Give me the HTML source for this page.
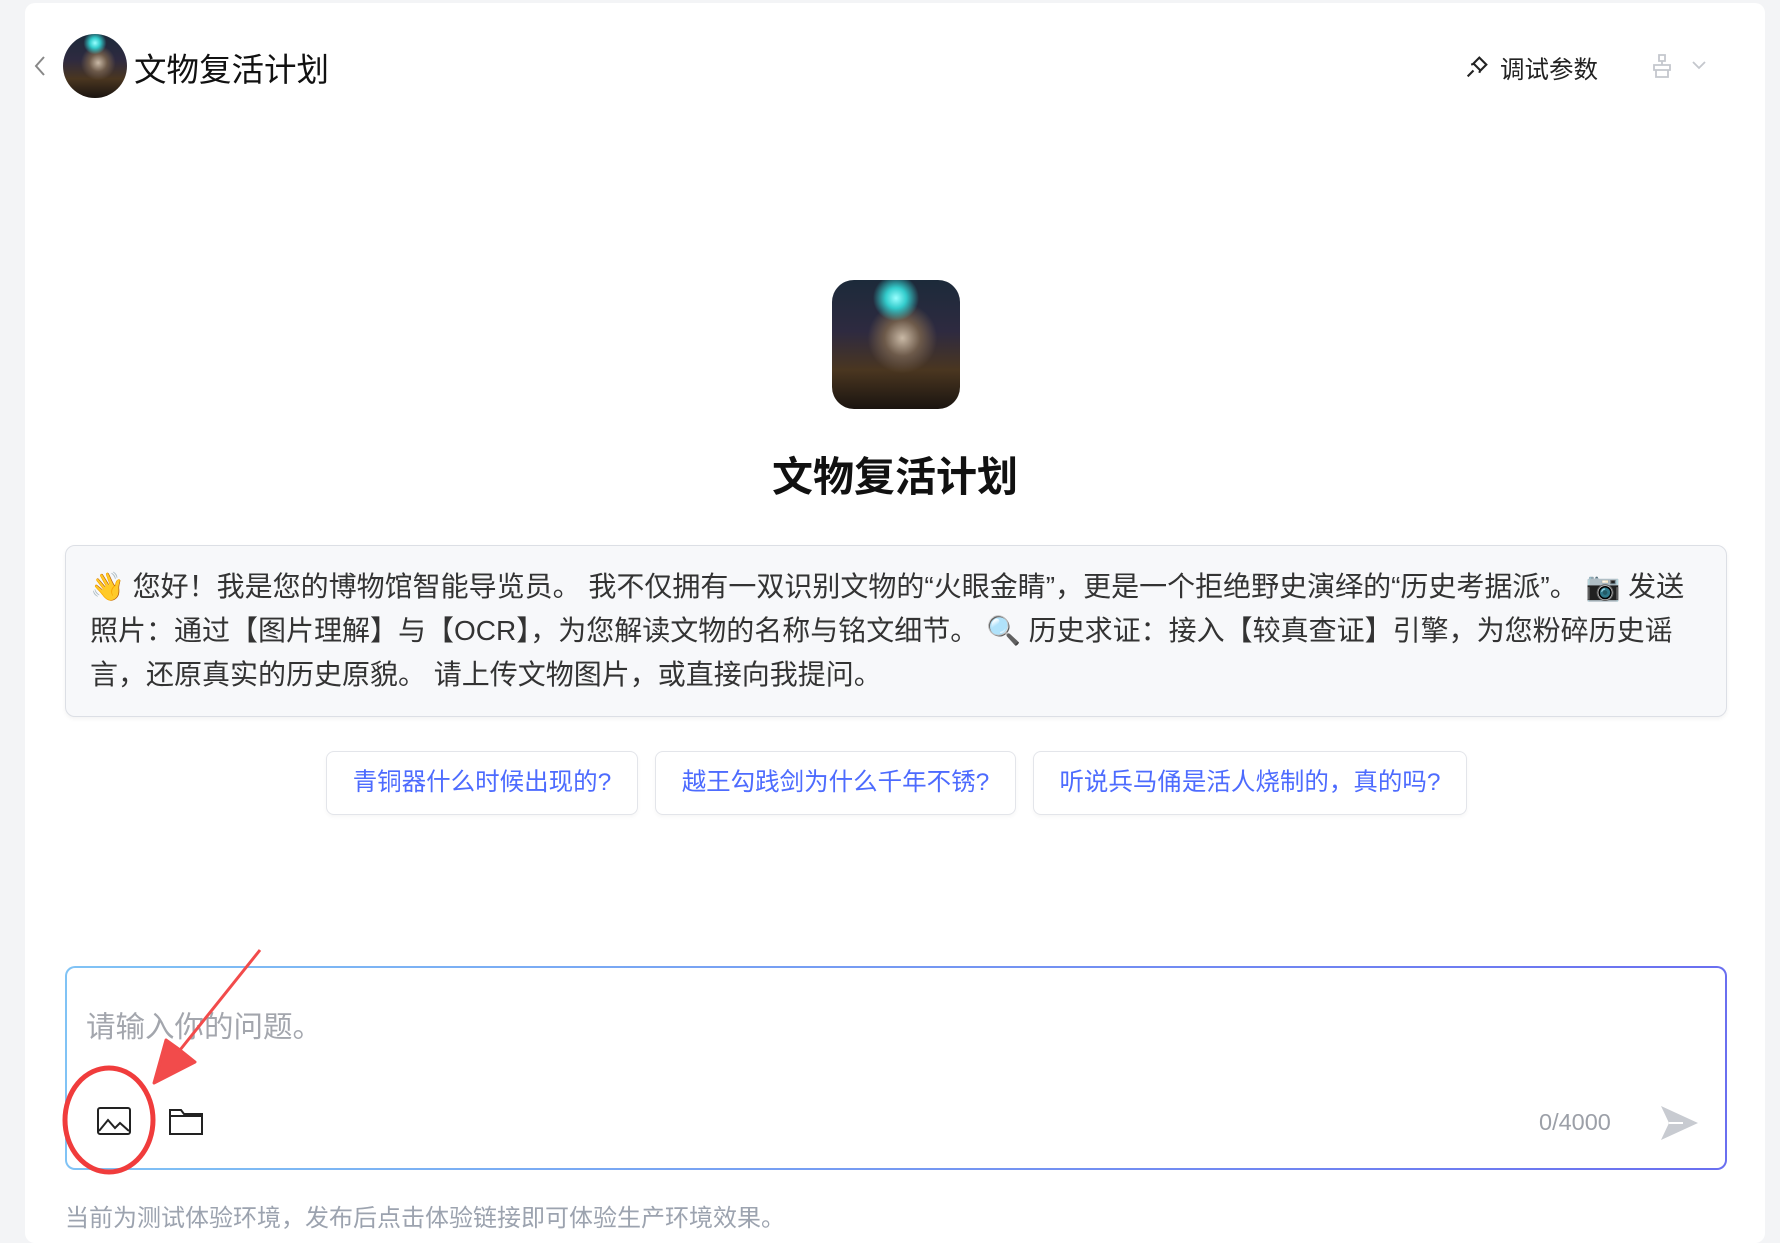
<!DOCTYPE html>
<html><head><meta charset="utf-8"><style>
*{margin:0;padding:0;box-sizing:border-box}
body{width:1780px;height:1230px;background:#f3f4f6;font-family:"Liberation Sans","Noto Sans CJK SC",sans-serif;position:relative;overflow:hidden}
.card{position:absolute;left:25px;top:3px;width:1740px;height:1240px;background:#fff;border-radius:10px}
.abs{position:absolute}
.img{background:radial-gradient(circle at 50% 14%,#9ff 0,#3cc 8%,transparent 18%),radial-gradient(ellipse at 55% 45%,#c9b9a6 0,#6d5a4a 18%,transparent 35%),linear-gradient(180deg,#1c2a3a 0%,#2e2a40 40%,#4a3620 70%,#1a1410 100%)}
.intro{left:65px;top:545px;width:1662px;height:172px;background:#f7f8fa;border:1px solid #dcdfe5;border-radius:10px;box-shadow:0 2px 4px rgba(0,0,0,.05);padding:19px 24px;font-size:28px;line-height:44px;color:#333}
.chip{top:751px;height:64px;border:1px solid #e3e5ea;border-radius:8px;background:#fff;color:#4d6bfe;font-size:24.5px;line-height:62px;text-align:center;box-shadow:0 2px 4px rgba(0,0,0,.04)}
.input{left:65px;top:966px;width:1662px;height:204px;border-radius:10px;padding:2px;background:linear-gradient(90deg,#80c3f5,#6a6ff0)}
.input>div{width:100%;height:100%;background:#fff;border-radius:8px}
</style></head><body>
<div class="card"></div>
<svg class="abs" style="left:32px;top:54px" width="16" height="24" viewBox="0 0 16 24"><path d="M12 3 4 12l8 9" fill="none" stroke="#888" stroke-width="2"/></svg>
<div class="abs img" style="left:63px;top:34px;width:64px;height:64px;border-radius:50%"></div>
<div class="abs" style="left:134px;top:44px;font-size:32.5px;color:#111">文物复活计划</div>
<svg class="abs" style="left:1463px;top:53px" width="28" height="28" viewBox="0 0 24 24" fill="none" stroke="#222" stroke-width="1.8"><path d="M14 4l6 6-5 5-6-6z M9 15l-5 5 M10 9l-3 1 M15 14l-1 3"/></svg>
<div class="abs" style="left:1500px;top:51px;font-size:24.5px;color:#222">调试参数</div>
<svg class="abs" style="left:1650px;top:52px" width="24" height="28" viewBox="0 0 24 28" fill="none" stroke="#c4c7cd" stroke-width="1.8"><path d="M9 3h6v6H9z M12 9v4 M4 13h16v5H4z M6 18v7h12v-7"/></svg>
<svg class="abs" style="left:1690px;top:58px" width="18" height="14" viewBox="0 0 18 14"><path d="M3 4l6 6 6-6" fill="none" stroke="#c4c7cd" stroke-width="1.8"/></svg>
<div class="abs img" style="left:832px;top:280px;width:128px;height:129px;border-radius:22px"></div>
<div class="abs" style="left:0;width:1790px;top:443px;text-align:center;font-size:41px;font-weight:bold;color:#111">文物复活计划</div>
<div class="abs intro">👋 您好！我是您的博物馆智能导览员。 我不仅拥有一双识别文物的“火眼金睛”，更是一个拒绝野史演绎的“历史考据派”。 📷 发送照片：通过【图片理解】与【OCR】，为您解读文物的名称与铭文细节。 🔍 历史求证：接入【较真查证】引擎，为您粉碎历史谣言，还原真实的历史原貌。 请上传文物图片，或直接向我提问。</div>
<div class="abs chip" style="left:326px;width:312px">青铜器什么时候出现的?</div>
<div class="abs chip" style="left:655px;width:361px">越王勾践剑为什么千年不锈?</div>
<div class="abs chip" style="left:1033px;width:434px">听说兵马俑是活人烧制的，真的吗?</div>
<div class="abs input"><div></div></div>
<div class="abs" style="left:86px;top:1004px;font-size:29.5px;color:#a3a6ad">请输入你的问题。</div>
<svg class="abs" style="left:96px;top:1106px" width="36" height="30" viewBox="0 0 36 30" fill="none" stroke="#222" stroke-width="2"><rect x="2" y="2" width="32" height="26" rx="2"/><path d="M3 25l9-11 7 8 5-5 9 8"/></svg>
<svg class="abs" style="left:168px;top:1106px" width="36" height="30" viewBox="0 0 36 30" fill="none" stroke="#222" stroke-width="2"><path d="M2 4h11l3 4h18v20H2z M2 10h32"/></svg>
<div class="abs" style="left:1539px;top:1109px;font-size:23.5px;color:#9ca0a8">0/4000</div>
<svg class="abs" style="left:1658px;top:1102px" width="42" height="42" viewBox="0 0 42 42"><path d="M3 4l37 17L3 38l8-17z" fill="#c8cbd1"/><path d="M11 21h14" stroke="#fff" stroke-width="2"/></svg>
<div class="abs" style="left:65px;top:1198px;font-size:24px;color:#9ca3af">当前为测试体验环境，发布后点击体验链接即可体验生产环境效果。</div>
<svg class="abs" style="left:0;top:0" width="1780" height="1230"><ellipse cx="109" cy="1120" rx="44" ry="52" fill="none" stroke="#f03c3c" stroke-width="5"/><path d="M260 950 L180 1050 L195 1062 L154 1083 L166 1040 L180 1050" fill="#f24b4b" stroke="#f24b4b" stroke-width="3" stroke-linejoin="round"/></svg>
</body></html>
